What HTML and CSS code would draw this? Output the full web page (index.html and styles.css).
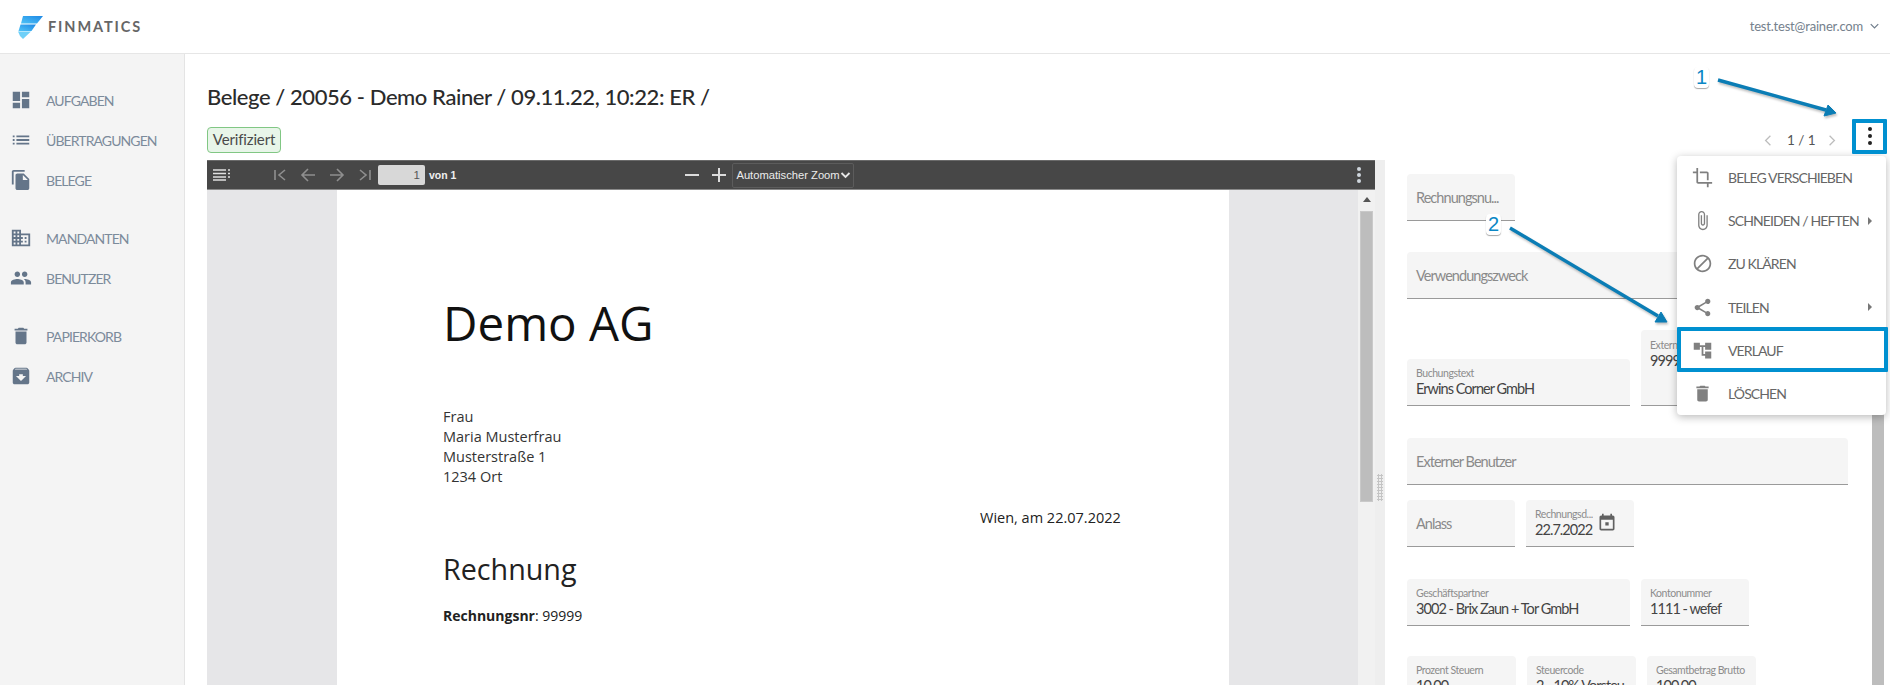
FILE: index.html
```html
<!DOCTYPE html>
<html lang="de">
<head>
<meta charset="utf-8">
<title>Finmatics</title>
<link rel="stylesheet" href="styles.css">
</head>
<body>
<div class="app">
  <header class="topbar">
    <div class="logo">
      <svg class="logo-mark" viewBox="0 0 26 24" width="26" height="24">
        <defs>
          <linearGradient id="lg" x1="0" y1="1" x2="1" y2="0"><stop offset="0" stop-color="#4fc3f7"/><stop offset="1" stop-color="#1e88e5"/></linearGradient>
        </defs>
        <polygon points="6,1 26,1 20,8.5 4,8.5" fill="url(#lg)"/>
        <polygon points="3.5,9.5 19,9.5 14.5,16 1.5,16" fill="url(#lg)"/>
        <polygon points="1,16.5 14,16.5 6,24 3,21" fill="#6fd0f8"/>
      </svg>
      <span class="logo-text">FINMATICS</span>
    </div>
    <div class="user">
      <span>test.test@rainer.com</span>
      <svg viewBox="0 0 12 8" width="9" height="6" class="user-chev"><path d="M1 1.5l5 5 5-5" fill="none" stroke="#6f7d8b" stroke-width="1.6"/></svg>
    </div>
  </header>
  <div class="body">
    <nav class="sidebar">
      <div class="nav-group">
        <a class="nav-item"><svg viewBox="0 0 24 24" class="nav-icon"><path d="M3 13h8V3H3v10zm0 8h8v-6H3v6zm10 0h8V11h-8v10zm0-18v6h8V3h-8z"/></svg>AUFGABEN</a>
        <a class="nav-item"><svg viewBox="0 0 24 24" class="nav-icon"><path d="M3 13h2v-2H3v2zm0 4h2v-2H3v2zm0-8h2V7H3v2zm4 4h14v-2H7v2zm0 4h14v-2H7v2zM7 7v2h14V7H7z"/></svg>ÜBERTRAGUNGEN</a>
        <a class="nav-item"><svg viewBox="0 0 24 24" class="nav-icon"><path d="M16 1H4c-1.1 0-2 .9-2 2v14h2V3h12V1zm-1 4l6 6v10c0 1.1-.9 2-2 2H7.99C6.89 23 6 22.1 6 21l.01-14c0-1.1.89-2 1.99-2h7zm-1 7h5.5L14 6.5V12z"/></svg>BELEGE</a>
      </div>
      <div class="nav-group">
        <a class="nav-item"><svg viewBox="0 0 24 24" class="nav-icon"><path d="M12 7V3H2v18h20V7H12zM6 19H4v-2h2v2zm0-4H4v-2h2v2zm0-4H4V9h2v2zm0-4H4V5h2v2zm4 12H8v-2h2v2zm0-4H8v-2h2v2zm0-4H8V9h2v2zm0-4H8V5h2v2zm10 12h-8v-2h2v-2h-2v-2h2v-2h-2V9h8v10zm-2-8h-2v2h2v-2zm0 4h-2v2h2v-2z"/></svg>MANDANTEN</a>
        <a class="nav-item"><svg viewBox="0 0 24 24" class="nav-icon"><path d="M16 11c1.66 0 2.99-1.34 2.99-3S17.66 5 16 5c-1.66 0-3 1.34-3 3s1.34 3 3 3zm-8 0c1.66 0 2.99-1.34 2.99-3S9.66 5 8 5C6.34 5 5 6.34 5 8s1.34 3 3 3zm0 2c-2.33 0-7 1.17-7 3.5V19h14v-2.5c0-2.33-4.67-3.5-7-3.5zm8 0c-.29 0-.62.02-.97.05 1.16.84 1.97 1.97 1.97 3.45V19h6v-2.5c0-2.33-4.67-3.5-7-3.5z"/></svg>BENUTZER</a>
      </div>
      <div class="nav-group">
        <a class="nav-item"><svg viewBox="0 0 24 24" class="nav-icon"><path d="M6 19c0 1.1.9 2 2 2h8c1.1 0 2-.9 2-2V7H6v12zM19 4h-3.5l-1-1h-5l-1 1H5v2h14V4z"/></svg>PAPIERKORB</a>
        <a class="nav-item"><svg viewBox="0 0 24 24" class="nav-icon"><path d="M20.54 5.23l-1.39-1.68C18.88 3.21 18.47 3 18 3H6c-.47 0-.88.21-1.16.55L3.46 5.23C3.17 5.57 3 6.02 3 6.5V19c0 1.1.9 2 2 2h14c1.1 0 2-.9 2-2V6.5c0-.48-.17-.93-.46-1.27zM12 17.5L6.5 12H10v-2h4v2h3.5L12 17.5zM5.12 5l.81-1h12l.94 1H5.12z"/></svg>ARCHIV</a>
      </div>
    </nav>
    <main class="main">
      <h1 class="title">Belege / 20056 - Demo Rainer / 09.11.22, 10:22: ER /</h1>
      <div class="statusrow">
        <span class="badge">Verifiziert</span>
        <div class="pager">
          <svg viewBox="0 0 10 16" width="8" height="13"><path d="M8 2L2 8l6 6" fill="none" stroke="#bdbdbd" stroke-width="1.6"/></svg>
          <span class="pager-text">1 / 1</span>
          <svg viewBox="0 0 10 16" width="8" height="13"><path d="M2 2l6 6-6 6" fill="none" stroke="#bdbdbd" stroke-width="1.6"/></svg>
          <button class="kebab"><i></i><i></i><i></i></button>
        </div>
      </div>
      <div class="content">
        <section class="viewer">
          <div class="pdfbar">
            <svg class="pb-menu" viewBox="0 0 17 12" width="17" height="12"><path d="M0 1h13M0 4.5h13M0 8h13M0 11h13M15 1h2M15 4.5h2M15 8h2" stroke="#e0e0e0" stroke-width="1.6" fill="none"/></svg>
            <svg class="pb-first" viewBox="0 0 14 14" width="14" height="14"><path d="M2 2v10M12 2L6 7l6 5" fill="none" stroke="#8f8f8f" stroke-width="1.6"/></svg>
            <svg class="pb-nav" viewBox="0 0 16 14" width="16" height="14"><path d="M15 7H2M8 1L2 7l6 6" fill="none" stroke="#8f8f8f" stroke-width="1.6"/></svg>
            <svg class="pb-nav" viewBox="0 0 16 14" width="16" height="14"><path d="M1 7h13M8 1l6 6-6 6" fill="none" stroke="#8f8f8f" stroke-width="1.6"/></svg>
            <svg class="pb-nav" viewBox="0 0 14 14" width="14" height="14"><path d="M12 2v10M2 2l6 5-6 5" fill="none" stroke="#8f8f8f" stroke-width="1.6"/></svg>
            <span class="pb-input">1</span>
            <span class="pb-of">von 1</span>
            <svg class="pb-minus" viewBox="0 0 16 16" width="16" height="16"><path d="M1 8h14" stroke="#dcdcdc" stroke-width="2"/></svg>
            <svg class="pb-plus" viewBox="0 0 16 16" width="16" height="16"><path d="M1 8h14M8 1v14" stroke="#dcdcdc" stroke-width="2"/></svg>
            <span class="pb-select">Automatischer Zoom<svg viewBox="0 0 10 7" width="11" height="7"><path d="M1 1l4 4 4-4" fill="none" stroke="#e6e6e6" stroke-width="1.8"/></svg></span>
            <span class="pb-more"><i></i><i></i><i></i></span>
          </div>
          <div class="pdfarea">
            <div class="doc">
              <div class="doc-page">
                <div class="doc-company">Demo AG</div>
                <div class="doc-address">Frau<br>Maria Musterfrau<br>Musterstraße 1<br>1234 Ort</div>
                <div class="doc-date">Wien, am 22.07.2022</div>
                <div class="doc-heading">Rechnung</div>
                <div class="doc-line"><b>Rechnungsnr</b>: 99999</div>
              </div>
            </div>
            <div class="pdfscroll">
              <svg viewBox="0 0 10 6" width="8" height="5" class="pdfscroll-up"><path d="M5 0l5 6H0z" fill="#555"/></svg>
              <div class="pdfscroll-thumb"></div>
            </div>
          </div>
        </section>
        <div class="splitter"><div class="grip"></div></div>
        <section class="formpane">
          <div class="form">
            <div class="row r1"><div class="field s"><span class="ph">Rechnungsnu...</span></div></div>
            <div class="row r2"><div class="field full"><span class="ph">Verwendungszweck</span></div></div>
            <div class="row r3">
              <div class="field m"><label>Buchungstext</label><span class="val">Erwins Corner GmbH</span></div>
              <div class="field s tall"><label>Externe Belegnummer</label><span class="val">99999</span></div>
            </div>
            <div class="row r4"><div class="field full"><span class="ph">Externer Benutzer</span></div></div>
            <div class="row r5">
              <div class="field s"><span class="ph">Anlass</span></div>
              <div class="field s date"><div class="date-text"><label>Rechnungsd...</label><span class="val">22.7.2022</span></div>
                <svg viewBox="0 0 24 24" width="20" height="20" class="cal"><path d="M19 3h-1V1h-2v2H8V1H6v2H5c-1.1 0-2 .9-2 2v14c0 1.1.9 2 2 2h14c1.1 0 2-.9 2-2V5c0-1.1-.9-2-2-2zm0 16H5V8h14v11zM10 11h4v4h-4z" fill="#616161"/></svg></div>
            </div>
            <div class="row r6">
              <div class="field m"><label>Geschäftspartner</label><span class="val">3002 - Brix Zaun + Tor GmbH</span></div>
              <div class="field s"><label>Kontonummer</label><span class="val">1111 - wefef</span></div>
            </div>
            <div class="row r7">
              <div class="field s"><label>Prozent Steuern</label><span class="val">10,00</span></div>
              <div class="field s"><label>Steuercode</label><span class="val">2 - 10% Vorsteu</span></div>
              <div class="field s"><label>Gesamtbetrag Brutto</label><span class="val">100,00</span></div>
            </div>
          </div>
          <div class="formscroll"></div>
        </section>
      </div>
    </main>
  </div>

  <div class="menu">
    <div class="menu-item"><svg viewBox="0 0 24 24" class="menu-icon"><path d="M17 15h2V7c0-1.1-.9-2-2-2H9v2h8v8zM7 17V1H5v4H1v2h4v10c0 1.1.9 2 2 2h10v4h2v-4h4v-2H7z"/></svg>BELEG VERSCHIEBEN</div>
    <div class="menu-item"><svg viewBox="0 0 24 24" class="menu-icon"><path d="M16.5 6v11.5c0 2.21-1.79 4-4 4s-4-1.79-4-4V5c0-1.38 1.12-2.5 2.5-2.5s2.5 1.12 2.5 2.5v10.5c0 .55-.45 1-1 1s-1-.45-1-1V6H10v9.5c0 1.38 1.12 2.5 2.5 2.5s2.5-1.12 2.5-2.5V5c0-2.21-1.79-4-4-4S7 2.79 7 5v12.5c0 3.04 2.46 5.5 5.5 5.5s5.5-2.46 5.5-5.5V6h-1.5z"/></svg>SCHNEIDEN / HEFTEN<span class="caret"></span></div>
    <div class="menu-item"><svg viewBox="0 0 24 24" class="menu-icon"><path d="M12 2C6.48 2 2 6.48 2 12s4.48 10 10 10 10-4.48 10-10S17.52 2 12 2zM4 12c0-4.42 3.58-8 8-8 1.85 0 3.55.63 4.9 1.69L5.69 16.9C4.63 15.55 4 13.85 4 12zm8 8c-1.85 0-3.55-.63-4.9-1.69L18.31 7.1C19.37 8.45 20 10.15 20 12c0 4.42-3.58 8-8 8z"/></svg>ZU KLÄREN</div>
    <div class="menu-item"><svg viewBox="0 0 24 24" class="menu-icon"><path d="M18 16.08c-.76 0-1.44.3-1.96.77L8.91 12.7c.05-.23.09-.46.09-.7s-.04-.47-.09-.7l7.05-4.11c.54.5 1.25.81 2.04.81 1.66 0 3-1.34 3-3s-1.34-3-3-3-3 1.34-3 3c0 .24.04.47.09.7L8.04 9.81C7.5 9.31 6.79 9 6 9c-1.66 0-3 1.34-3 3s1.34 3 3 3c.79 0 1.5-.31 2.04-.81l7.12 4.16c-.05.21-.08.43-.08.65 0 1.61 1.31 2.92 2.92 2.92 1.61 0 2.92-1.31 2.92-2.92s-1.31-2.92-2.92-2.92z"/></svg>TEILEN<span class="caret"></span></div>
    <div class="menu-item"><svg viewBox="0 0 24 24" class="menu-icon"><path d="M22 11V3h-7v3H9V3H2v8h7V8h2v10h4v3h7v-8h-7v3h-2V8h2v3z"/></svg>VERLAUF</div>
    <div class="menu-item"><svg viewBox="0 0 24 24" class="menu-icon"><path d="M6 19c0 1.1.9 2 2 2h8c1.1 0 2-.9 2-2V7H6v12zM19 4h-3.5l-1-1h-5l-1 1H5v2h14V4z"/></svg>LÖSCHEN</div>
  </div>

  <div class="hl hl-kebab"></div>
  <div class="hl hl-verlauf"></div>
  <svg class="arrows" viewBox="0 0 1890 685" width="1890" height="685">
    <path d="M1718 80L1826 110M1510 228L1658 316" stroke="#0b7db5" stroke-width="3.4" fill="none"/>
    <polygon points="1836,113 1824,116 1828,105" fill="#0b7db5" stroke="#0b7db5" stroke-width="1"/>
    <polygon points="1667,322 1655,322 1661,312" fill="#0b7db5" stroke="#0b7db5" stroke-width="1"/>
  </svg>
  <span class="callout c1">1</span>
  <span class="callout c2">2</span>
</div>
</body>
</html>
```
FILE: styles.css
```css
* { box-sizing: border-box; }
html, body { margin: 0; padding: 0; height: 685px; overflow: hidden; background: #fff; }
body { font-family: "Lato", "Liberation Sans", sans-serif; color: #444; }
.app { position: relative; width: 1890px; height: 685px; overflow: hidden; display: flex; flex-direction: column; }

.topbar { height: 54px; flex: none; display: flex; align-items: center; justify-content: space-between; border-bottom: 1px solid #e6e6e6; padding: 0 11px 0 17px; background: #fff; }
.logo { display: flex; align-items: center; }
.logo-mark { margin-right: 5px; }
.logo-text { font-size: 14.5px; font-weight: 700; letter-spacing: 1.9px; color: #666; }
.user { display: flex; align-items: center; gap: 7px; font-size: 13px; letter-spacing: -.2px; color: #75818d; margin-bottom: 2px; }

.body { flex: 1; display: flex; min-height: 0; }
.sidebar { width: 185px; flex: none; background: #f4f4f4; border-right: 1px solid #e4e4e4; padding-top: 26px; }
.nav-group { margin-bottom: 18px; }
.nav-item { height: 40px; display: flex; align-items: center; font-size: 14px; letter-spacing: -.9px; color: #7c8b9b; padding-left: 10px; }
.nav-icon { width: 22px; height: 22px; fill: #647589; margin-right: 14px; flex: none; }

.main { flex: 1; min-width: 0; padding-left: 22px; display: flex; flex-direction: column; }
.title { margin: 0; height: 73px; padding-top: 29px; font-size: 22px; line-height: 28px; font-weight: 500; letter-spacing: -.42px; color: #2b2b2b; }
.statusrow { height: 33px; display: flex; align-items: flex-start; justify-content: space-between; }
.badge { height: 26px; line-height: 23px; width: 74px; text-align: center; font-size: 15px; letter-spacing: -.15px; color: #4a4a4a; background: #e8f5e9; border: 1.5px solid #81c784; border-radius: 4px; }
.pager { display: flex; align-items: center; height: 26px; padding-right: 3px; }
.pager-text { font-size: 13.5px; color: #555; margin: 0 15px; width: 26px; white-space: nowrap; }
.kebab { width: 35px; height: 35px; margin-left: 16px; margin-top: -8px; border: 0; background: transparent; display: flex; flex-direction: column; align-items: center; justify-content: center; gap: 3px; padding: 0; }
.kebab i { width: 4px; height: 4px; border-radius: 50%; background: #222; }

.content { flex: 1; display: flex; min-height: 0; }
.viewer { width: 1168px; flex: none; display: flex; flex-direction: column; }
.pdfbar { height: 30px; flex: none; background: #474747; border-bottom: 1px solid #8a8a8a; border-top: 1px solid #6a6a6a; display: flex; align-items: center; padding: 0 14px 0 6px; position: relative; z-index: 1; }
.pb-first { margin-left: 43px; }
.pb-nav { margin-left: 13px; }
.pb-input { width: 47px; height: 20px; margin-left: 6px; background: #d8d8d8; border-radius: 2px; color: #555; font: 11.5px/20px "Liberation Sans", sans-serif; text-align: right; padding-right: 5px; }
.pb-of { margin-left: 4px; color: #f0f0f0; font: 700 10.5px "Liberation Sans", sans-serif; }
.pb-minus { margin-left: 228px; }
.pb-plus { margin-left: 11px; }
.pb-select { margin-left: 5px; width: 122px; height: 25px; border: 1px solid #5c5c5c; border-radius: 2px; display: flex; align-items: center; justify-content: space-between; padding: 0 2px 0 3px; color: #ececec; font: 400 11.2px "Liberation Sans", sans-serif; white-space: nowrap; }
.pb-more { margin-left: auto; display: flex; flex-direction: column; gap: 2px; }
.pb-more i { width: 4px; height: 4px; border-radius: 50%; background: #cfd6dd; }

.pdfarea { flex: 1; min-height: 0; display: flex; }
.doc { flex: 1; background: #e6e6e8; padding: 0 129px 0 130px; }
.doc-page { height: 100%; background: #fff; padding-left: 106px; color: #222; font-family: "Open Sans", sans-serif; }
.doc-company { padding-top: 99px; font-size: 47.5px; line-height: 68px; color: #111; }
.doc-address { margin-top: 50px; font-size: 14.5px; line-height: 20px; color: #333; }
.doc-date { margin-top: 21px; padding-left: 537px; font-size: 14.5px; line-height: 20px; }
.doc-heading { margin-top: 21px; font-size: 28.7px; line-height: 40px; color: #222; }
.doc-line { margin-top: 17px; font-size: 14px; line-height: 20px; }
.pdfscroll { width: 17px; flex: none; background: #f1f1f1; display: flex; flex-direction: column; align-items: center; }
.pdfscroll-up { margin-top: 7px; }
.pdfscroll-thumb { width: 13px; height: 291px; margin-top: 9px; background: #bdbdbd; border: 1px solid #c9c9c9; }

.splitter { width: 10px; flex: none; background: #eee; display: flex; justify-content: center; padding-top: 314px; }
.grip { width: 6px; height: 27px; background-image: radial-gradient(#c4c4c4 1px, transparent 1.2px); background-size: 3px 3px; }

.formpane { flex: 1; min-width: 0; display: flex; padding-left: 22px; }
.form { width: 441px; flex: none; padding-top: 14px; }
.row { display: flex; gap: 11px; align-items: flex-end; }
.r2, .r3 { margin-top: 31px; }
.r4, .r6 { margin-top: 32px; }
.r5 { margin-top: 15px; }
.r7 { margin-top: 30px; }
.field { height: 47px; background: #f5f5f5; border-bottom: 1px solid #9a9a9a; border-radius: 4px 4px 0 0; padding: 0 9px; display: flex; flex-direction: column; justify-content: center; overflow: hidden; white-space: nowrap; }
.field.s { width: 108px; }
.r7 .field.s { width: 109px; }
.field.m { width: 223px; }
.field.full { width: 441px; }
.field.tall { height: 76px; justify-content: flex-start; padding-top: 9px; }
.field.date { flex-direction: row; align-items: center; justify-content: flex-start; gap: 4px; padding-right: 4px; }
.date-text { min-width: 0; }
.ph { font-size: 14.5px; letter-spacing: -.95px; color: #8a8a8a; }
.field label { display: block; font-size: 10.5px; letter-spacing: -.45px; line-height: 13px; color: #8c8c8c; overflow: hidden; }
.val { display: block; font-size: 14.5px; letter-spacing: -.95px; line-height: 18px; color: #444; }
.cal { flex: none; }
.formscroll { width: 12px; margin-left: 24px; background: #bdbdbd; flex: none; }

.menu { position: absolute; left: 1677px; top: 156px; width: 209px; height: 259px; background: #fff; border-radius: 4px; box-shadow: 0 2px 8px rgba(0,0,0,.28); padding: 0; z-index: 3; }
.menu-item { height: 43.2px; display: flex; align-items: center; font-size: 14px; letter-spacing: -.9px; color: #666; padding-left: 15px; position: relative; }
.menu-icon { width: 21px; height: 21px; fill: #808080; margin-right: 15px; flex: none; }
.caret { position: absolute; right: 14px; top: 50%; margin-top: -4px; border-left: 4px solid #777; border-top: 4px solid transparent; border-bottom: 4px solid transparent; }

.hl { position: absolute; border: 4px solid #0090d0; z-index: 4; border-radius: 1px; }
.hl-kebab { left: 1852px; top: 119px; width: 35px; height: 35px; }
.hl-verlauf { left: 1677px; top: 327px; width: 211px; height: 45px; }
.arrows { position: absolute; left: 0; top: 0; z-index: 5; pointer-events: none; filter: drop-shadow(1px 2px 1px rgba(0,0,0,.25)); }
.callout { position: absolute; z-index: 6; background: #fff; color: #0b87c5; font-family: "Liberation Sans", sans-serif; font-size: 20px; line-height: 21px; padding: 0 2px; border-radius: 4px; box-shadow: 0 1px 1px rgba(0,0,0,.35); }
.c1 { left: 1694px; top: 67px; }
.c2 { left: 1486px; top: 214px; }
```
